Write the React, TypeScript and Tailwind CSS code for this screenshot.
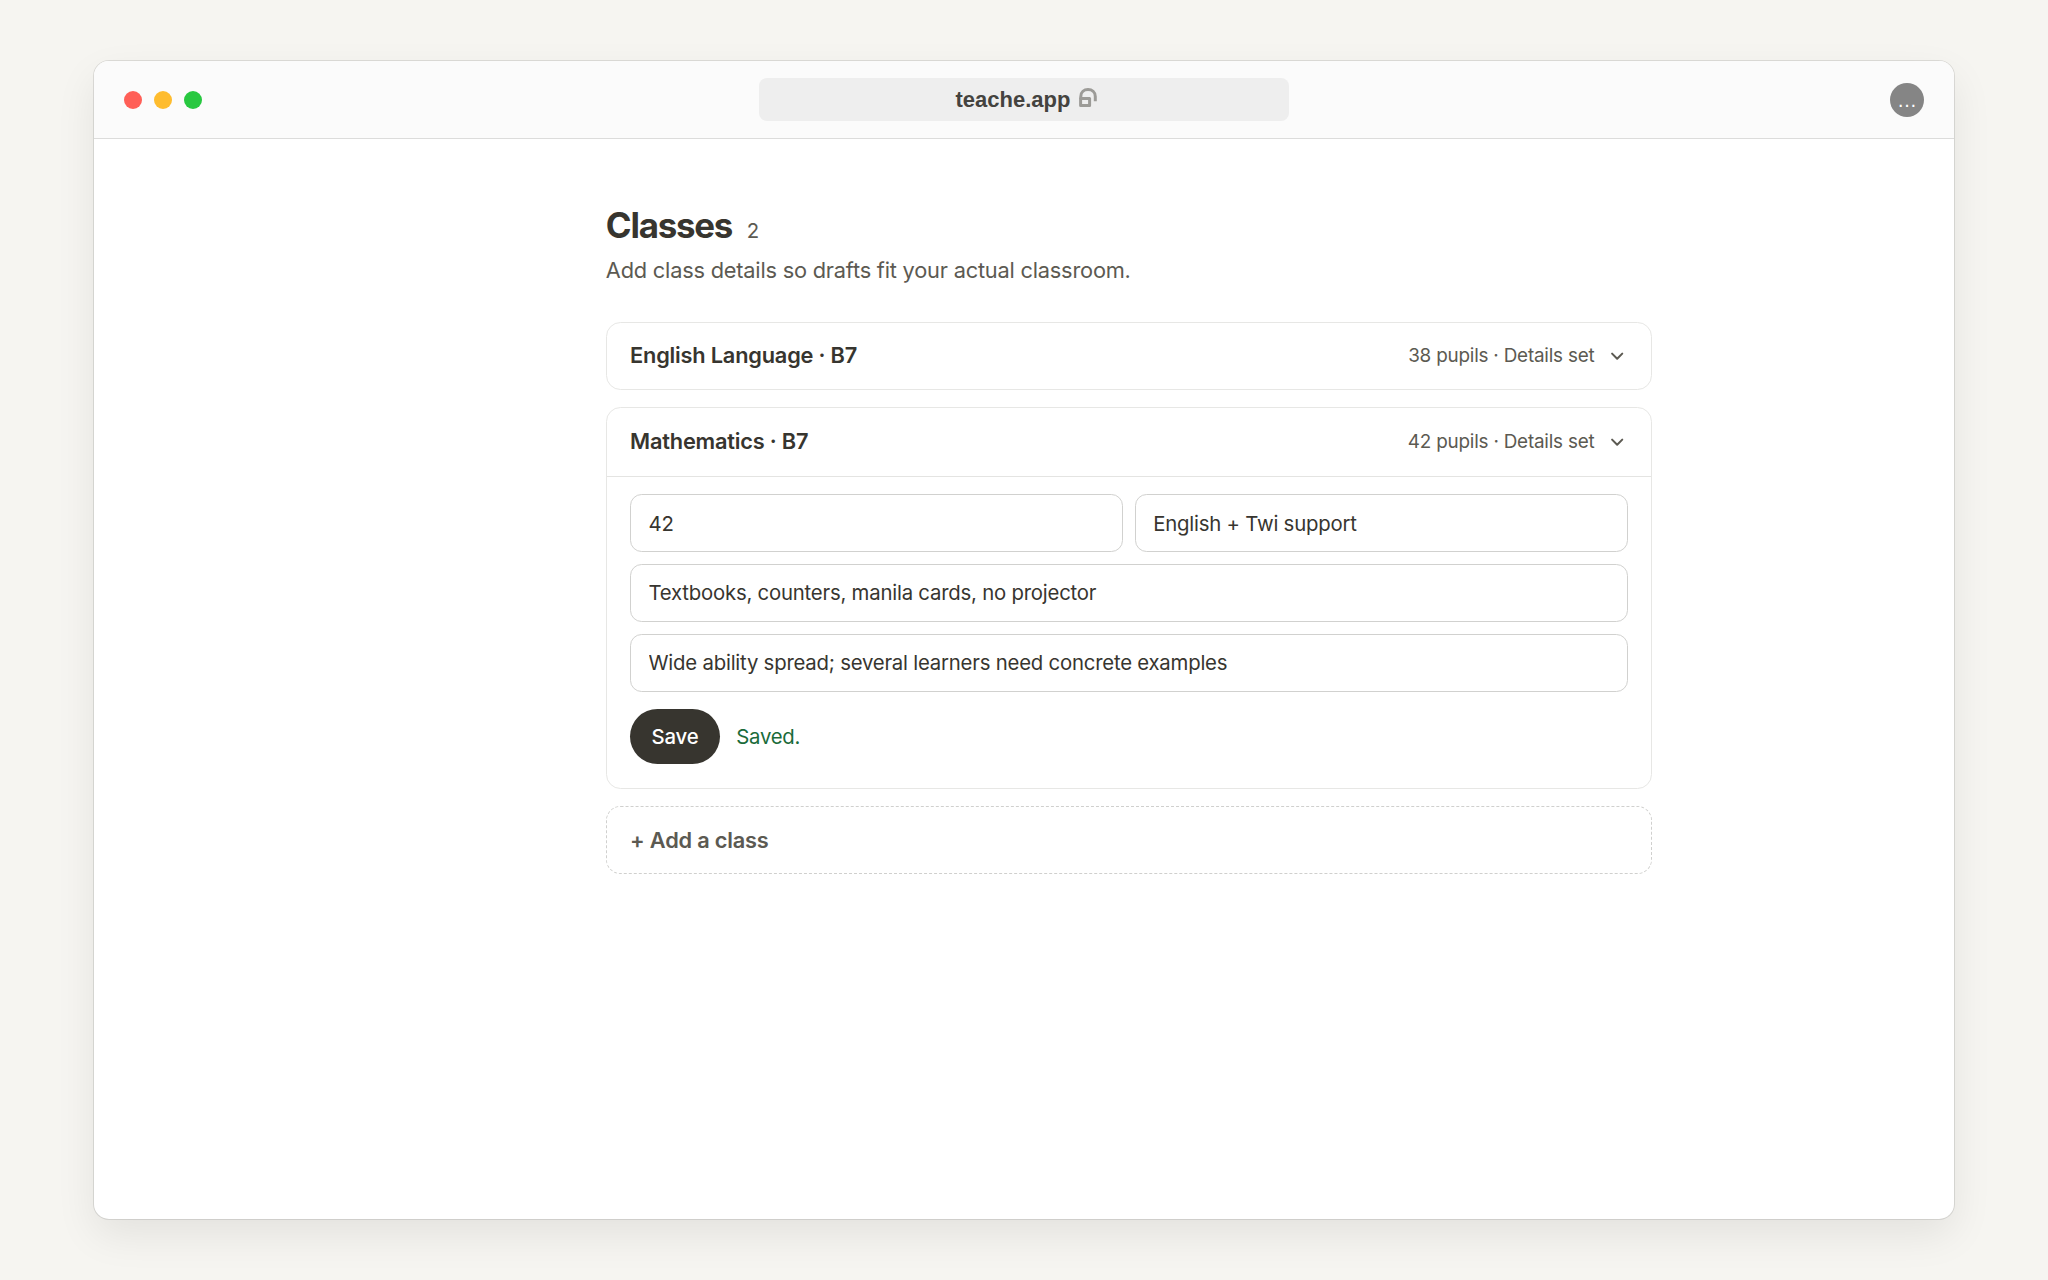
import type { ReactNode } from "react";
import { clsx } from "clsx";
import { ChevronDown } from "lucide-react";

const CLASSES = [
  { name: "English Language · B7", summary: "38 pupils · Details set", open: false },
  { name: "Mathematics · B7", summary: "42 pupils · Details set", open: true },
] as const;

const LIGHTS = ["bg-[#ff5f57]", "bg-[#febc2e]", "bg-[#28c840]"] as const;

function LockIcon() {
  return (
    <svg
      aria-hidden
      className="mb-1"
      width="18"
      height="19"
      viewBox="0 0 18 19"
      fill="none"
      stroke="#9c9b97"
      strokeWidth="3"
      strokeLinejoin="round"
    >
      <path d="M1.8 11V8.5C1.8 4 5 1.5 9 1.5s7.3 2.5 7.3 7v4.8" />
      <rect x="1.6" y="10.5" width="9" height="7" />
    </svg>
  );
}

function BrowserBar() {
  return (
    <header className="flex h-[78px] items-center justify-between border-b border-[#dcdcdb] bg-[#fbfbfb] px-[30px]">
      <div className="flex w-[200px] gap-3">
        {LIGHTS.map((color) => (
          <span key={color} className={clsx("size-[18px] rounded-full", color)} />
        ))}
      </div>
      <div className="flex h-[43px] w-[530px] items-center justify-center gap-[9px] rounded-lg bg-[#eeeeee] pl-[5px] font-['Liberation_Sans',sans-serif] text-[22px] font-bold text-[#44433f]">
        teache.app
        <LockIcon />
      </div>
      <div className="flex w-[200px] justify-end">
        <span className="flex size-[34px] items-center justify-center rounded-full bg-[#858585] font-['Liberation_Sans',sans-serif] text-[20px] leading-none text-white">
          …
        </span>
      </div>
    </header>
  );
}

function Field({ value, className }: { value: string; className?: string }) {
  return (
    <input
      readOnly
      value={value}
      className={clsx(
        "h-10 w-full min-w-0 rounded-lg border border-[#d1d1cf] bg-white px-3 text-sm text-[#37352f] outline-none",
        className,
      )}
    />
  );
}

type ClassCardProps = {
  name: string;
  summary: string;
  children?: ReactNode;
};

function ClassCard({ name, summary, children }: ClassCardProps) {
  return (
    <section className="rounded-[10px] border border-[#e7e7e5] bg-white">
      <div className={clsx("flex items-center justify-between px-4", children ? "h-[46.3px]" : "h-[45.2px]")}>
        <h2 className="pb-px text-[15px] font-semibold">{name}</h2>
        <div className="flex items-center gap-[8.4px] pr-[0.6px] text-[13px] text-[#5c5a52]">
          {summary}
          <ChevronDown aria-hidden size={14} strokeWidth={2.4} />
        </div>
      </div>
      {children}
    </section>
  );
}

function ClassForm() {
  return (
    <div className="border-t border-[#e4e4e2] px-4 pt-3 pb-4">
      <div className="grid grid-cols-2 gap-2">
        <Field value="42" />
        <Field value="English + Twi support" />
        <Field value="Textbooks, counters, manila cards, no projector" className="col-span-2" />
        <Field value="Wide ability spread; several learners need concrete examples" className="col-span-2" />
      </div>
      <div className="mt-3 flex items-center gap-[11.2px] text-sm">
        <button className="h-[38px] rounded-full bg-[#37352f] px-[14.8px] font-medium text-white">Save</button>
        <span className="text-[#1a6b3a]">Saved.</span>
      </div>
    </div>
  );
}

// The page is laid out at 1280px wide and zoomed to fill the window frame.
function ClassesPage() {
  return (
    <div className="w-[1280px] [zoom:1.453125]">
      <main className="ml-[352.25px] w-[720px] pt-[43.2px] tracking-[-0.009em]">
        <div className="flex items-baseline gap-2.5">
          <h1 className="text-2xl leading-8 font-bold tracking-[-0.035em]">Classes</h1>
          <span className="text-sm text-[#5c5a52]">2</span>
        </div>
        <p className="mt-[3.1px] text-[15px] leading-[23.5px] text-[#5c5a52]">
          Add class details so drafts fit your actual classroom.
        </p>
        <div className="mt-[24.3px] flex flex-col gap-3">
          {CLASSES.map(({ name, summary, open }) => (
            <ClassCard key={name} name={name} summary={summary}>
              {open ? <ClassForm /> : null}
            </ClassCard>
          ))}
          <button className="h-[46.6px] rounded-[10px] border border-dashed border-[#d0d0ce] px-4 text-left text-[15px] font-semibold text-[#5c5a52]">
            + Add a class
          </button>
        </div>
      </main>
    </div>
  );
}

export default function App() {
  return (
    <div className="flex h-[1280px] w-[2048px] items-center justify-center bg-[#f6f5f1]">
      <div className="h-[1158px] w-[1860px] overflow-hidden rounded-[15px] bg-white font-['Inter',sans-serif] text-[#37352f] shadow-[0_0_0_1px_rgba(0,0,0,0.1),0_16px_40px_rgba(0,0,0,0.08)]">
        <BrowserBar />
        <ClassesPage />
      </div>
    </div>
  );
}
